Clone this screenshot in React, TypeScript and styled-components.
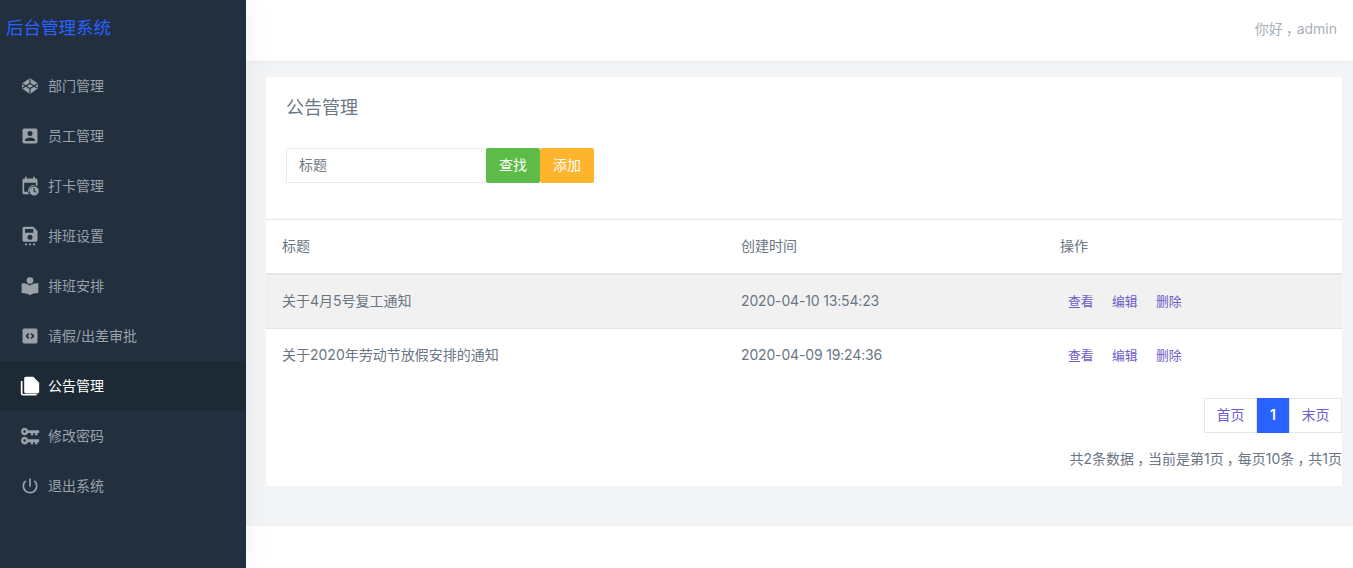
import React from "react";
import styled, { createGlobalStyle } from "styled-components";

const GlobalStyle = createGlobalStyle`
  html, body {
    margin: 0;
    padding: 0;
    background: #fff;
    font-family: "Inter", "Noto Sans CJK SC", "Noto Sans", sans-serif;
    overflow: hidden;
  }
  * { box-sizing: border-box; }
`;

const Page = styled.div`
  display: flex;
  width: 1353px;
  height: 568px;
  overflow: hidden;
`;

const Sidebar = styled.aside`
  position: relative;
  z-index: 2;
  width: 246px;
  flex: none;
  background: #212f3f;
  box-shadow: 0 0 30px rgba(0, 0, 0, 0.06);
`;

const Brand = styled.div`
  height: 61px;
  padding-left: 6px;
  font-size: 17.5px;
  line-height: 56px;
  color: #2962ff;
`;

const Menu = styled.nav`
  display: flex;
  flex-direction: column;
`;

const MenuItem = styled.a<{ $active?: boolean }>`
  display: flex;
  align-items: center;
  height: 50px;
  padding-left: 20px;
  font-size: 14px;
  color: ${({ $active }) => ($active ? "#fff" : "#9aa1a9")};
  background: ${({ $active }) => ($active ? "#1d2935" : "transparent")};
  svg {
    width: 20px;
    height: 20px;
    flex: none;
    margin-right: 8px;
    fill: currentColor;
  }
`;

const MenuLabel = styled.span`
  margin-top: -2px;
`;

const Main = styled.div`
  flex: 1;
  min-width: 0;
  display: flex;
  flex-direction: column;
`;

const Header = styled.header`
  position: relative;
  height: 61px;
  display: flex;
  align-items: center;
  justify-content: flex-end;
  padding: 0 16px 6px 0;
  font-size: 14px;
  color: #a8b0b9;
  background: #fff;
  box-shadow: 0 1px 6px rgba(0, 0, 0, 0.05);
`;

// the comma sits in the middle of its full-width box in the reference
const Comma = styled.span`
  display: inline-block;
  width: 14px;
  padding-left: 4px;
  font-feature-settings: "palt";
`;

const Content = styled.main`
  height: 465px;
  padding: 16px 11px 0 20px;
  background: #f3f4f6;
`;

const Card = styled.section`
  height: 409px;
  background: #fff;
`;

const CardHead = styled.div`
  height: 143px;
  padding: 18px 20px 0;
  border-bottom: 1px solid #e3e6ea;
`;

const Title = styled.h4`
  margin: 0 0 27px;
  font-size: 18px;
  font-weight: 400;
  line-height: 26px;
  color: #6a7682;
`;

const SearchRow = styled.div`
  display: flex;
`;

const SearchInput = styled.div`
  width: 200px;
  height: 35px;
  padding-left: 12px;
  font-size: 14px;
  line-height: 31px;
  color: #6f7a85;
  border: 1px solid #e9ecef;
  border-right: 0;
  border-radius: 2px 0 0 2px;
`;

const Button = styled.button<{ $color: string }>`
  width: 54px;
  height: 35px;
  padding: 0 0 3px;
  border: 0;
  border-radius: 2px;
  font-family: inherit;
  font-size: 14px;
  color: #fff;
  background: ${({ $color }) => $color};
`;

const Table = styled.table`
  width: 100%;
  border-collapse: collapse;
  table-layout: fixed;
  font-size: 14px;
  color: #6a7682;
`;

const HeadCell = styled.th<{ $width?: number }>`
  width: ${({ $width }) => ($width ? `${$width}px` : "auto")};
  height: 54px;
  padding: 0 16px 4px;
  font-weight: 400;
  text-align: left;
  border-bottom: 2px solid #e3e6ea;
`;

const Row = styled.tr<{ $shaded?: boolean }>`
  background: ${({ $shaded }) => ($shaded ? "#f1f1f2" : "#fff")};
  border-bottom: 1px solid #e3e6ea;
  &:last-child {
    border-bottom: 0;
  }
`;

const Cell = styled.td`
  height: 54px;
  padding: 0 16px 2px;
`;

const TimeCell = styled(Cell)`
  letter-spacing: -0.16px;
`;

const Actions = styled.div`
  display: flex;
  gap: 18.4px;
  padding-left: 8px;
`;

const ActionLink = styled.a`
  font-size: 12.8px;
  color: #6f5bc9;
`;

const Footer = styled.div`
  display: flex;
  flex-direction: column;
  align-items: flex-end;
  padding-top: 16px;
`;

const Pager = styled.div`
  display: flex;
  height: 35px;
  font-size: 14px;
  line-height: 31px;
  color: #6f5bc9;
`;

const PagerItem = styled.a<{ $width: number; $current?: boolean }>`
  width: ${({ $width }) => $width}px;
  text-align: center;
  border: 1px solid ${({ $current }) => ($current ? "#2962ff" : "#e3e6ea")};
  background: ${({ $current }) => ($current ? "#2962ff" : "#fff")};
  color: ${({ $current }) => ($current ? "#fff" : "#6f5bc9")};
  font-weight: ${({ $current }) => ($current ? 600 : 400)};
`;

const Summary = styled.div`
  margin-top: 15px;
  font-size: 14px;
  line-height: 22px;
  color: #6a7682;
  white-space: nowrap;
`;

const icons: Record<string, React.ReactNode> = {
  codepen: (
    <svg viewBox="0 0 24 24">
      <path d="M12 2.500 21.500 9v6L12 21.500 2.500 15V9L12 2.500Z" />
      <path
        d="M12 3v6M12 15v6M12 9l5 3-5 3-5-3 5-3ZM7 12 3 9.300M7 12l-4 2.700M17 12l4-2.700M17 12l4 2.700"
        fill="none"
        stroke="#212f3f"
        strokeWidth="1.400"
      />
    </svg>
  ),
  account: (
    <svg viewBox="0 0 24 24">
      <path d="M3 5v14a2 2 0 0 0 2 2h14a2 2 0 0 0 2-2V5a2 2 0 0 0-2-2H5a2 2 0 0 0-2 2Zm12 4a3 3 0 1 1-6 0 3 3 0 0 1 6 0Zm-9 8c0-2 4-3.100 6-3.100s6 1.100 6 3.100v1H6v-1Z" fillRule="evenodd" />
    </svg>
  ),
  calendar: (
    <svg viewBox="0 0 24 24">
      <path d="M6 1h2v2h8V1h2v2h1a2 2 0 0 1 2 2v7.200a7 7 0 0 0-9.800 9.800H5a2 2 0 0 1-2-2V5a2 2 0 0 1 2-2h1V1Zm-1 7v11h6.100A7 7 0 0 1 19 11.100V8H5Z" fillRule="evenodd" />
      <path d="M17 12.500a5.500 5.500 0 1 1 0 11 5.500 5.500 0 0 1 0-11Zm-.8 2v4l3 1.700.7-1.100-2.300-1.400v-3.200h-1.400Z" fillRule="evenodd" />
    </svg>
  ),
  save: (
    <svg viewBox="0 0 24 24">
      <path d="M5 1h11l5 5v11a2 2 0 0 1-2 2H5a2 2 0 0 1-2-2V3a2 2 0 0 1 2-2Zm1 2.500V8h10V3.500H6ZM12 10.500a3 3 0 1 0 0 6 3 3 0 0 0 0-6Z" fillRule="evenodd" />
      <path d="M6 21h2.400v2H6zM10.800 21h2.400v2h-2.400zM15.600 21H18v2h-2.400z" />
    </svg>
  ),
  reader: (
    <svg viewBox="0 0 24 24">
      <circle cx="12" cy="5.500" r="4" />
      <path d="M12 11.500C9.500 9.500 6 8.800 2 8.800v11.700c4 0 7.500.8 10 2.500 2.500-1.700 6-2.500 10-2.500V8.800c-4 0-7.500.7-10 2.700Z" />
    </svg>
  ),
  code: (
    <svg viewBox="0 0 24 24">
      <path d="M3 5a2 2 0 0 1 2-2h14a2 2 0 0 1 2 2v14a2 2 0 0 1-2 2H5a2 2 0 0 1-2-2V5Zm7 3.500L6.500 12l3.500 3.500 1.300-1.300L9.100 12l2.200-2.200L10 8.500Zm4 0-1.300 1.300 2.200 2.200-2.200 2.200 1.300 1.300 3.500-3.500L14 8.500Z" fillRule="evenodd" />
    </svg>
  ),
  files: (
    <svg viewBox="0 0 24 24">
      <path d="M3 6H1v15a2.500 2.500 0 0 0 2.500 2.500H20v-2H3.500a.5.5 0 0 1-.5-.5V6Z" />
      <path d="M7 1h9l7 7v11a2 2 0 0 1-2 2H7a2 2 0 0 1-2-2V3a2 2 0 0 1 2-2Z" />
    </svg>
  ),
  keys: (
    <svg viewBox="0 0 24 24">
      <path d="M5.500 2a4.500 4.500 0 0 1 4.300 3H23v3.500h-2V11h-3V8.500h-2V11h-3V8.500H9.800A4.500 4.500 0 1 1 5.500 2Zm0 3a1.500 1.500 0 1 0 0 3 1.500 1.500 0 0 0 0-3Z" fillRule="evenodd" />
      <path d="M5.500 13a4.500 4.500 0 0 1 4.300 3H23v3.500h-2V22h-3v-2.500h-2V22h-3v-2.500H9.800A4.500 4.500 0 1 1 5.500 13Zm0 3a1.500 1.500 0 1 0 0 3 1.500 1.500 0 0 0 0-3Z" fillRule="evenodd" />
    </svg>
  ),
  power: (
    <svg viewBox="0 0 24 24">
      <path d="M13 3h-2v10h2V3Zm4.800 2.200-1.400 1.400A7 7 0 1 1 7.600 6.600L6.200 5.200a9 9 0 1 0 11.600 0Z" />
    </svg>
  ),
};

const menuItems = [
  { label: "部门管理", icon: "codepen" },
  { label: "员工管理", icon: "account" },
  { label: "打卡管理", icon: "calendar" },
  { label: "排班设置", icon: "save" },
  { label: "排班安排", icon: "reader" },
  { label: "请假/出差审批", icon: "code" },
  { label: "公告管理", icon: "files", active: true },
  { label: "修改密码", icon: "keys" },
  { label: "退出系统", icon: "power" },
];

const notices = [
  { title: "关于4月5号复工通知", time: "2020-04-10 13:54:23" },
  { title: "关于2020年劳动节放假安排的通知", time: "2020-04-09 19:24:36" },
];

export default function App() {
  return (
    <Page>
      <GlobalStyle />
      <Sidebar>
        <Brand>后台管理系统</Brand>
        <Menu>
          {menuItems.map((item) => (
            <MenuItem key={item.label} $active={item.active}>
              {icons[item.icon]}
              <MenuLabel>{item.label}</MenuLabel>
            </MenuItem>
          ))}
        </Menu>
      </Sidebar>
      <Main>
        <Header>
          <span>
            你好<Comma>，</Comma>admin
          </span>
        </Header>
        <Content>
          <Card>
            <CardHead>
              <Title>公告管理</Title>
              <SearchRow>
                <SearchInput>标题</SearchInput>
                <Button $color="#5cbc47">查找</Button>
                <Button $color="#ffb42e">添加</Button>
              </SearchRow>
            </CardHead>
            <Table>
              <thead>
                <tr>
                  <HeadCell $width={459}>标题</HeadCell>
                  <HeadCell $width={319}>创建时间</HeadCell>
                  <HeadCell>操作</HeadCell>
                </tr>
              </thead>
              <tbody>
                {notices.map((notice, index) => (
                  <Row key={notice.time} $shaded={index === 0}>
                    <Cell>{notice.title}</Cell>
                    <TimeCell>{notice.time}</TimeCell>
                    <Cell>
                      <Actions>
                        <ActionLink>查看</ActionLink>
                        <ActionLink>编辑</ActionLink>
                        <ActionLink>删除</ActionLink>
                      </Actions>
                    </Cell>
                  </Row>
                ))}
              </tbody>
            </Table>
            <Footer>
              <Pager>
                <PagerItem $width={53}>首页</PagerItem>
                <PagerItem $width={32} $current>1</PagerItem>
                <PagerItem $width={53}>末页</PagerItem>
              </Pager>
              <Summary>
                共2条数据<Comma>，</Comma>当前是第1页<Comma>，</Comma>每页10条<Comma>，</Comma>共1页
              </Summary>
            </Footer>
          </Card>
        </Content>
      </Main>
    </Page>
  );
}
